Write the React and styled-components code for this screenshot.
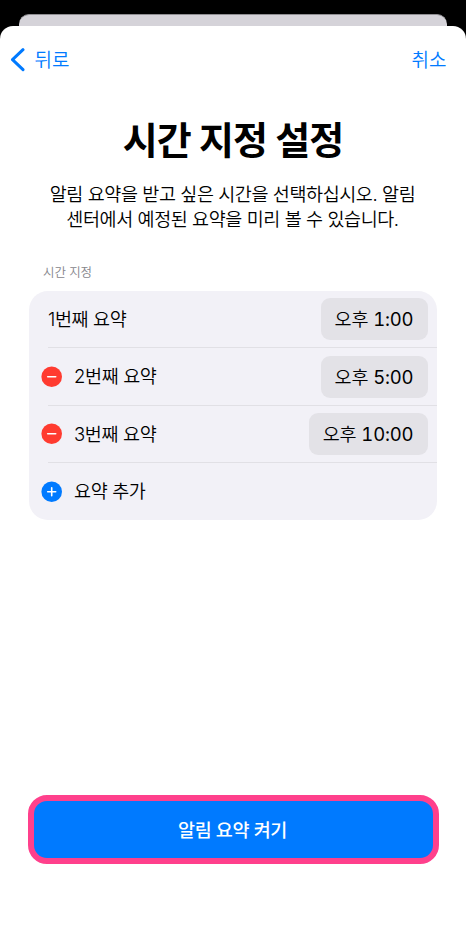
import React from 'react';
import styled, { createGlobalStyle } from 'styled-components';

const GlobalStyle = createGlobalStyle`
  * { box-sizing: border-box; }
  body { margin: 0; background: #000; font-family: Inter, "Noto Sans CJK KR", sans-serif; }
`;
const Screen = styled.div`
  height: 947px;
  padding-top: 14px;
  background: #000;
  overflow: hidden;
`;
const BackCard = styled.div`
  height: 12px;
  margin: 0 19px;
  border-radius: 10px 10px 0 0;
  background: #d5d3d9;
  border-top: 1px solid #8f8e92;
`;
const Sheet = styled.main`
  height: 921px;
  background: #fff;
  border-radius: 13px 13px 0 0;
  display: flex;
  flex-direction: column;
`;
const NavBar = styled.nav`
  height: 66px;
  padding: 2px 19.5px 0 10px;
  display: flex;
  justify-content: space-between;
  align-items: center;
`;
const NavButton = styled.button`
  border: 0;
  padding: 0;
  background: none;
  display: flex;
  align-items: center;
  gap: 9.5px;
  color: #007aff;
  font: 350 19px/26px Inter, "Noto Sans CJK KR", sans-serif;
  white-space: nowrap;
`;
const NavLabel = styled.span`
  padding-top: 2px;
`;
const BackChevron = styled.svg`
  width: 15px;
  height: 24px;
  fill: none;
  stroke: #007aff;
  stroke-width: 3;
  stroke-linecap: round;
  stroke-linejoin: round;
`;
const Title = styled.h1`
  margin: 22px 0 0;
  height: 52px;
  text-align: center;
  font-size: 38px;
  line-height: 53px;
  font-weight: 700;
  letter-spacing: -0.9px;
  white-space: nowrap;
`;
const Description = styled.p`
  margin: 16px 1px 0 0;
  text-align: center;
  font-size: 18.5px;
  line-height: 25px;
  font-weight: 350;
  letter-spacing: -0.42px;
  white-space: nowrap;
`;
const SectionLabel = styled.h2`
  margin: 32px 0 0 43px;
  font-size: 12.5px;
  line-height: 18px;
  font-weight: 350;
  letter-spacing: -0.1px;
  color: #85858b;
`;
const List = styled.ul`
  margin: 9px 29px 0 28.5px;
  padding: 0;
  list-style: none;
  height: 229px;
  border-radius: 19px;
  background: #f2f1f7;
`;
const Row = styled.li`
  display: flex;
  height: 57.33px;
  align-items: center;
  padding: 0 9.5px 0 ${p => (p.$icon ? 12 : 19.5)}px;
  background: linear-gradient(#e1e0e5, #e1e0e5) 19px bottom / ${p => (p.$last ? 0 : 390)}px 1px no-repeat;
`;
const RowIcon = styled.svg`
  width: 22px;
  height: 22px;
  margin-right: 11.5px;
`;
const RowLabel = styled.span`
  flex: 1;
  padding-bottom: 3px;
  font-size: 18.5px;
  font-weight: 350;
  letter-spacing: -0.36px;
  white-space: nowrap;
`;
const TimeButton = styled.button`
  width: ${p => p.$width}px;
  height: 42px;
  margin-bottom: 0.5px;
  padding: 0;
  border: 0;
  border-radius: 9px;
  background: #e3e2e7;
  color: #000;
  font: 350 18.5px/42px Inter, "Noto Sans CJK KR", sans-serif;
  letter-spacing: -0.2px;
  white-space: nowrap;
`;
const Digits = styled.span`
  font-weight: 380;
  font-variant-numeric: tabular-nums;
`;
const EnableButton = styled.button`
  margin: auto 27px 83px 28px;
  height: 69px;
  padding: 0 2px 0 0;
  border: 6px solid #ff408c;
  border-radius: 19px;
  background: #007aff;
  color: #fff;
  font: 500 18.5px/59px Inter, "Noto Sans CJK KR", sans-serif;
  letter-spacing: -0.4px;
`;

const rows = [
  { label: '1번째 요약', period: '오후', time: '1:00', width: 107 },
  { label: '2번째 요약', icon: 'minus', period: '오후', time: '5:00', width: 107 },
  { label: '3번째 요약', icon: 'minus', period: '오후', time: '10:00', width: 119 },
  { label: '요약 추가', icon: 'plus' },
];

function CircleIcon({ kind }) {
  return (
    <RowIcon viewBox="0 0 22 22">
      <circle cx="10.7" cy="10.8" r="10.3" fill={kind === 'plus' ? '#007aff' : '#ff3b30'} />
      <path d={kind === 'plus' ? 'M6.7 10.8h8M10.7 6.8v8' : 'M6.7 10.8h8'} stroke="#fff" strokeWidth="1.6" strokeLinecap="round" />
    </RowIcon>
  );
}

export default function App() {
  return (
    <Screen>
      <GlobalStyle />
      <BackCard />
      <Sheet>
        <NavBar>
          <NavButton>
            <BackChevron viewBox="0 0 15 24"><path d="M13 1.7L2.5 11.7L13 21.7" /></BackChevron>
            <NavLabel>뒤로</NavLabel>
          </NavButton>
          <NavButton><NavLabel>취소</NavLabel></NavButton>
        </NavBar>
        <Title>시간 지정 설정</Title>
        <Description>알림 요약을 받고 싶은 시간을 선택하십시오. 알림<br />센터에서 예정된 요약을 미리 볼 수 있습니다.</Description>
        <SectionLabel>시간 지정</SectionLabel>
        <List>
          {rows.map((row, i) => (
            <Row key={row.label} $icon={!!row.icon} $last={i === rows.length - 1}>
              {row.icon && <CircleIcon kind={row.icon} />}
              <RowLabel>{row.label}</RowLabel>
              {row.time && <TimeButton $width={row.width}>{row.period} <Digits>{row.time}</Digits></TimeButton>}
            </Row>
          ))}
        </List>
        <EnableButton>알림 요약 켜기</EnableButton>
      </Sheet>
    </Screen>
  );
}
